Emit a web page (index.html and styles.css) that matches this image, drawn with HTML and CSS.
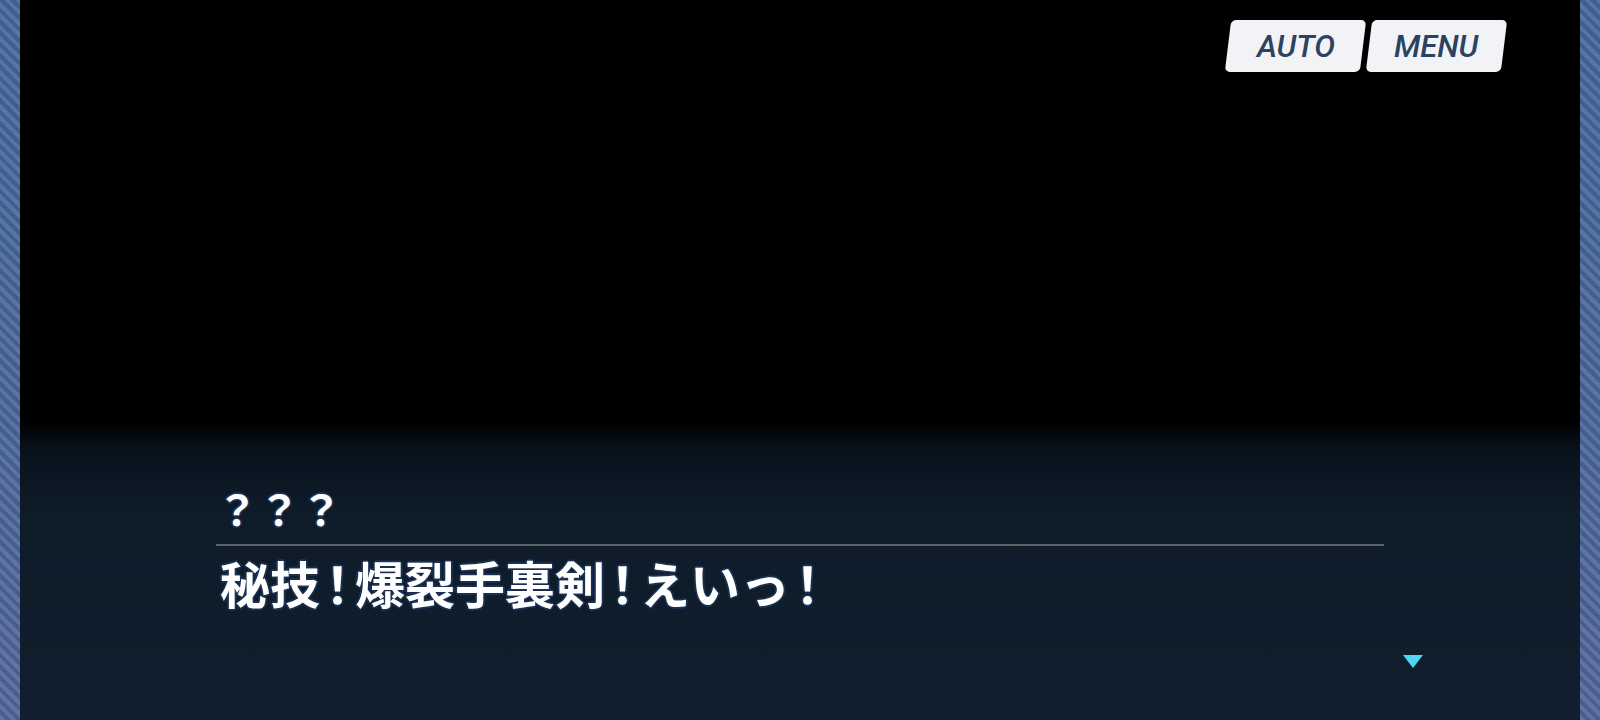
FILE: index.html
```html
<!DOCTYPE html>
<html lang="ja">
<head>
<meta charset="UTF-8">
<meta name="viewport" content="width=device-width, initial-scale=1.0">
<title>シナリオ</title>
<link rel="stylesheet" href="styles.css">
</head>
<body>
<div class="screen">
    <div class="rail"></div>

    <main class="stage">
        <div class="toolbar">
            <button class="tool-btn"><span class="tool-label">AUTO</span></button>
            <button class="tool-btn"><span class="tool-label">MENU</span></button>
        </div>

        <div class="dialog">
            <div class="dialog-inner">
                <div class="speaker">？？？</div>
                <div class="dialog-rule"></div>
                <div class="dialog-text">秘技<span class="bang">！</span>爆裂手裏剣<span class="bang">！</span>えいっ<span class="bang">！</span></div>
                <span class="next-mark"></span>
            </div>
        </div>
    </main>

    <div class="rail"></div>
</div>
</body>
</html>
```

FILE: styles.css
```css
html, body {
    margin: 0;
    height: 100%;
    background-color: #000;
    overflow: hidden;
}

.screen {
    display: flex;
    height: 720px;
}

/* 左右のストライプ枠 */
.rail {
    width: 20px;
    flex-shrink: 0;
    background:
        repeating-linear-gradient(45deg, rgba(255, 255, 255, 0.09) 0 4px, rgba(0, 0, 0, 0.08) 4px 8px),
        linear-gradient(to bottom, #44689b, #4a6699 60%, #53659a);
}

.stage {
    flex: 1;
    display: flex;
    flex-direction: column;
    background: linear-gradient(to bottom, #000 0, #000 420px, #08121c 450px, #0e1b29 510px, #111e2d 720px);
}

.toolbar {
    display: flex;
    justify-content: flex-end;
    gap: 6px;
    padding: 20px 76px 0 0;
}

.tool-btn {
    width: 135px;
    height: 52px;
    padding: 0;
    border: none;
    border-radius: 5px;
    background-color: #f1f3f6;
    box-shadow: 0 2px 4px rgba(0, 0, 0, 0.5);
    transform: skewX(-7deg);
    cursor: pointer;
}

.tool-label {
    display: inline-block;
    transform: skewX(7deg);
    font-family: Roboto, "Liberation Sans", sans-serif;
    font-style: italic;
    font-weight: 500;
    font-size: 31px;
    color: #2b4260;
}

.dialog {
    margin-top: auto;
    padding-bottom: 108px;
}

.dialog-inner {
    position: relative;
    width: 1168px;
    margin: 0 auto;
    font-family: "Noto Sans CJK JP", sans-serif;
    font-weight: 600;
    color: #fff;
    text-shadow:
        2px 0 0 #1a3050, -2px 0 0 #1a3050, 0 2px 0 #1a3050, 0 -2px 0 #1a3050,
        1px 1px 1px #1a3050, -1px -1px 1px #1a3050, 1px -1px 1px #1a3050, -1px 1px 1px #1a3050;
}

.speaker {
    font-size: 42px;
    font-weight: 700;
    line-height: 48px;
}

.dialog-rule {
    height: 2px;
    margin-top: 12px;
    background-color: #5c6168;
}

.dialog-text {
    margin-top: 6px;
    padding-left: 4px;
    font-size: 50px;
    line-height: 60px;
}

.bang {
    margin: 0 5px;
    font-feature-settings: "palt";
}

/* 次へ マーク */
.next-mark {
    position: absolute;
    left: 1187px;
    top: 171px;
    width: 0;
    height: 0;
    border-left: 10px solid transparent;
    border-right: 10px solid transparent;
    border-top: 13px solid #4fd6f2;
}
```
